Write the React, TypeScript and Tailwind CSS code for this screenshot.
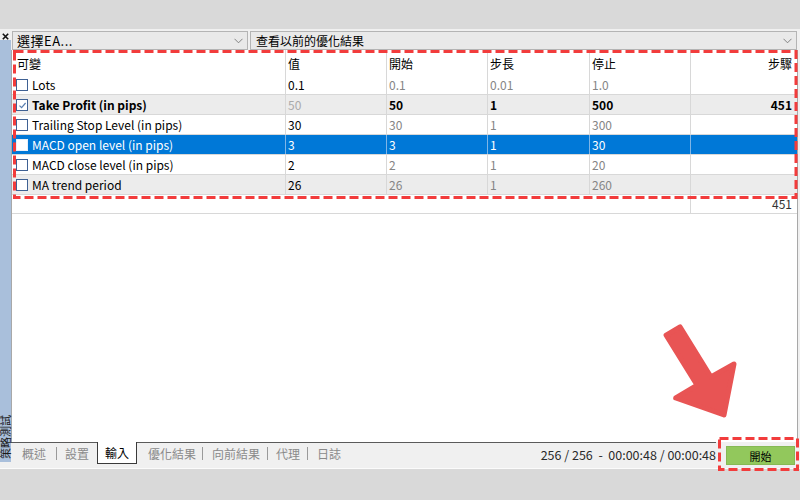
import React from "react";

type Row = {
  name: string;
  checked?: boolean;
  v: string;
  start: string;
  step: string;
  stop: string;
  steps?: string;
  kind: "white" | "gray" | "sel";
  bold?: boolean;
};

const rows: Row[] = [
  { name: "Lots", v: "0.1", start: "0.1", step: "0.01", stop: "1.0", kind: "white" },
  { name: "Take Profit (in pips)", checked: true, v: "50", start: "50", step: "1", stop: "500", steps: "451", kind: "gray", bold: true },
  { name: "Trailing Stop Level (in pips)", v: "30", start: "30", step: "1", stop: "300", kind: "white" },
  { name: "MACD open level (in pips)", v: "3", start: "3", step: "1", stop: "30", kind: "sel" },
  { name: "MACD close level (in pips)", v: "2", start: "2", step: "1", stop: "20", kind: "white" },
  { name: "MA trend period", v: "26", start: "26", step: "1", stop: "260", kind: "gray" },
];

function Checkbox({ checked, sel }: { checked?: boolean; sel?: boolean }) {
  return (
    <div
      className={
        "w-[12px] h-[12px] shrink-0 border flex items-center justify-center " +
        (sel ? "border-[#e8f0fa] bg-white" : "border-[#3f6193] bg-white")
      }
    >
      {checked && (
        <svg width="9" height="9" viewBox="0 0 9 9">
          <path d="M1.5 4.6 L3.6 6.7 L7.6 2" fill="none" stroke="#5a7fb0" strokeWidth="1.2" />
        </svg>
      )}
    </div>
  );
}

function Chevron() {
  return (
    <svg width="9" height="6" viewBox="0 0 9 6">
      <path d="M0.5 0.8 L4.5 4.8 L8.5 0.8" fill="none" stroke="#777" strokeWidth="0.9" />
    </svg>
  );
}

export default function App() {
  return (
    <div className="relative w-[800px] h-[500px] overflow-hidden bg-[#d9d9d9] font-['Noto_Sans_CJK_TC','Noto_Sans',sans-serif] text-[12px] leading-[16px] text-black">
      <div className="h-[29px] bg-[#d9d9d9]" />
      <div className="flex h-[440px] bg-[#f0f0f0] border-b border-[#fbfbfb]">
        {/* left strip */}
        <div className="w-[11px] flex flex-col">
          <div className="h-[11px] flex items-center justify-center pt-[3px]">
            <svg width="7" height="7" viewBox="0 0 7 7">
              <path d="M0.8 0.8 L6.2 6.2 M6.2 0.8 L0.8 6.2" stroke="#111" strokeWidth="1.6" />
            </svg>
          </div>
          <div className="flex-1 mb-[6px] bg-[#a9bfdb] flex flex-col justify-end items-center pb-[3px]">
            <span className="[writing-mode:vertical-rl] [text-orientation:sideways] rotate-180 text-[11px] leading-[11px] text-[#1a1a1a]">
              策略測試
            </span>
          </div>
        </div>
        {/* content */}
        <div className="w-[787px] flex flex-col">
          <div className="h-[21px] flex pt-[2px] pl-[1px] pr-[1px] gap-[2px]">
            <div className="w-[236px] h-[19px] border border-[#b4b4b4] bg-[#e9e9e9] flex items-center justify-between pl-[4px] pr-[4px]">
              <span className="text-[13px] leading-[16px] tracking-[0.5px]">選擇EA...</span>
              <Chevron />
            </div>
            <div className="flex-1 h-[19px] border border-[#b4b4b4] bg-[#e9e9e9] flex items-center justify-between pl-[5px] pr-[4px]">
              <span className="text-[12px] leading-[16px]">查看以前的優化結果</span>
              <Chevron />
            </div>
          </div>
          {/* table */}
          <div className="flex-1 bg-white border-l border-r border-[#a8a8a8] flex flex-col">
            <div className="grid grid-cols-[273px_101px_101px_102px_101px_1fr] h-[25px]">
              <div className="pl-[5px] pt-[6px]">可變</div>
              <div className="border-l border-[#d8d8d8] pl-[2px] pt-[6px]">值</div>
              <div className="border-l border-[#d8d8d8] pl-[2px] pt-[6px]">開始</div>
              <div className="border-l border-[#d8d8d8] pl-[2px] pt-[6px]">步長</div>
              <div className="border-l border-[#d8d8d8] pl-[2px] pt-[6px]">停止</div>
              <div className="border-l border-[#d8d8d8] pr-[5px] pt-[6px] text-right">步驟</div>
            </div>
            {rows.map((r) => {
              const sel = r.kind === "sel";
              const bg = sel ? "bg-[#0078d7] text-white" : r.kind === "gray" ? "bg-[#ececec]" : "bg-white";
              const div = sel ? "border-[#7fb5e6]" : "border-[#d8d8d8]";
              const dim = sel ? "text-white" : r.bold ? "text-black font-bold" : "text-[#858585]";
              const val = sel ? "text-white" : r.bold ? "text-[#aaaaaa]" : "text-black";
              return (
                <div
                  key={r.name}
                  className={"grid grid-cols-[273px_101px_101px_102px_101px_1fr] h-[20px] border-b border-[#d8d8d8] " + bg}
                >
                  <div className="flex items-center pl-[4px] gap-[4px] pt-[1px]">
                    <Checkbox checked={r.checked} sel={sel} />
                    <span className={r.bold ? "font-bold" : ""}>{r.name}</span>
                  </div>
                  <div className={"border-l flex items-center pl-[2px] pt-[1px] " + div + " " + val}>{r.v}</div>
                  <div className={"border-l flex items-center pl-[2px] pt-[1px] " + div + " " + dim}>{r.start}</div>
                  <div className={"border-l flex items-center pl-[2px] pt-[1px] " + div + " " + dim}>{r.step}</div>
                  <div className={"border-l flex items-center pl-[2px] pt-[1px] " + div + " " + dim}>{r.stop}</div>
                  <div className={"border-l flex items-center justify-end pr-[5px] pt-[1px] " + div + " " + dim}>{r.steps ?? ""}</div>
                </div>
              );
            })}
            <div className="grid grid-cols-[678px_1fr] h-[19px] border-b border-[#d8d8d8]">
              <div />
              <div className="border-l border-[#d8d8d8] flex items-center justify-end pr-[5px] text-[#333]">451</div>
            </div>
          </div>
          {/* tab bar */}
          <div className="h-[26px] flex items-start">
            <div className="w-[705px] h-[22px] border-t border-[#5a5a5a] flex items-stretch text-[12px] text-[#8a8a8a]">
              <div className="pl-[11px] w-[45px] flex items-center pt-[1px]">概述</div>
              <div className="w-px h-[13px] bg-[#9a9a9a] self-center" />
              <div className="ml-[8px] w-[32px] flex items-center pt-[1px]">設置</div>
              <div className="w-[40px] -mt-px h-[22px] border-l border-r border-b border-[#3a3a3a] bg-white flex items-center justify-center text-black pt-[1px]">
                輸入
              </div>
              <div className="ml-[11px] w-[54px] flex items-center pt-[1px]">優化結果</div>
              <div className="w-px h-[13px] bg-[#9a9a9a] self-center" />
              <div className="ml-[9px] w-[55px] flex items-center pt-[1px]">向前結果</div>
              <div className="w-px h-[13px] bg-[#9a9a9a] self-center" />
              <div className="ml-[8px] w-[31px] flex items-center pt-[1px]">代理</div>
              <div className="w-px h-[13px] bg-[#9a9a9a] self-center" />
              <div className="ml-[9px] flex items-center pt-[1px]">日誌</div>
              <div className="flex-1 flex items-center justify-end text-[12.5px] text-[#2a2a2a] whitespace-pre pt-[2px]">
                256 / 256  -  00:00:48 / 00:00:48
              </div>
            </div>
            <div className="ml-[10px] mt-[4px] w-[69px] h-[19px] bg-[#92c85c] border border-[#86b954] flex items-center justify-center text-[11px] text-black">
              開始
            </div>
          </div>
        </div>
      </div>

      {/* annotations overlay */}
      <svg className="absolute left-0 top-0 pointer-events-none" width="800" height="500" viewBox="0 0 800 500">
        <rect x="14.5" y="51.5" width="781.5" height="146" fill="none" stroke="#f23c3c" strokeWidth="3" strokeDasharray="9 4" />
        <rect x="719.5" y="438.5" width="78" height="31" fill="none" stroke="#f23c3c" strokeWidth="3" strokeDasharray="9 4" />
        <polygon
          points="680,326.9 710.9,376.9 734,364 724,415 675.7,398 697.1,385.1 666.1,335.1"
          fill="#e85454"
          stroke="#e85454"
          strokeWidth="5"
          strokeLinejoin="round"
        />
      </svg>
    </div>
  );
}
